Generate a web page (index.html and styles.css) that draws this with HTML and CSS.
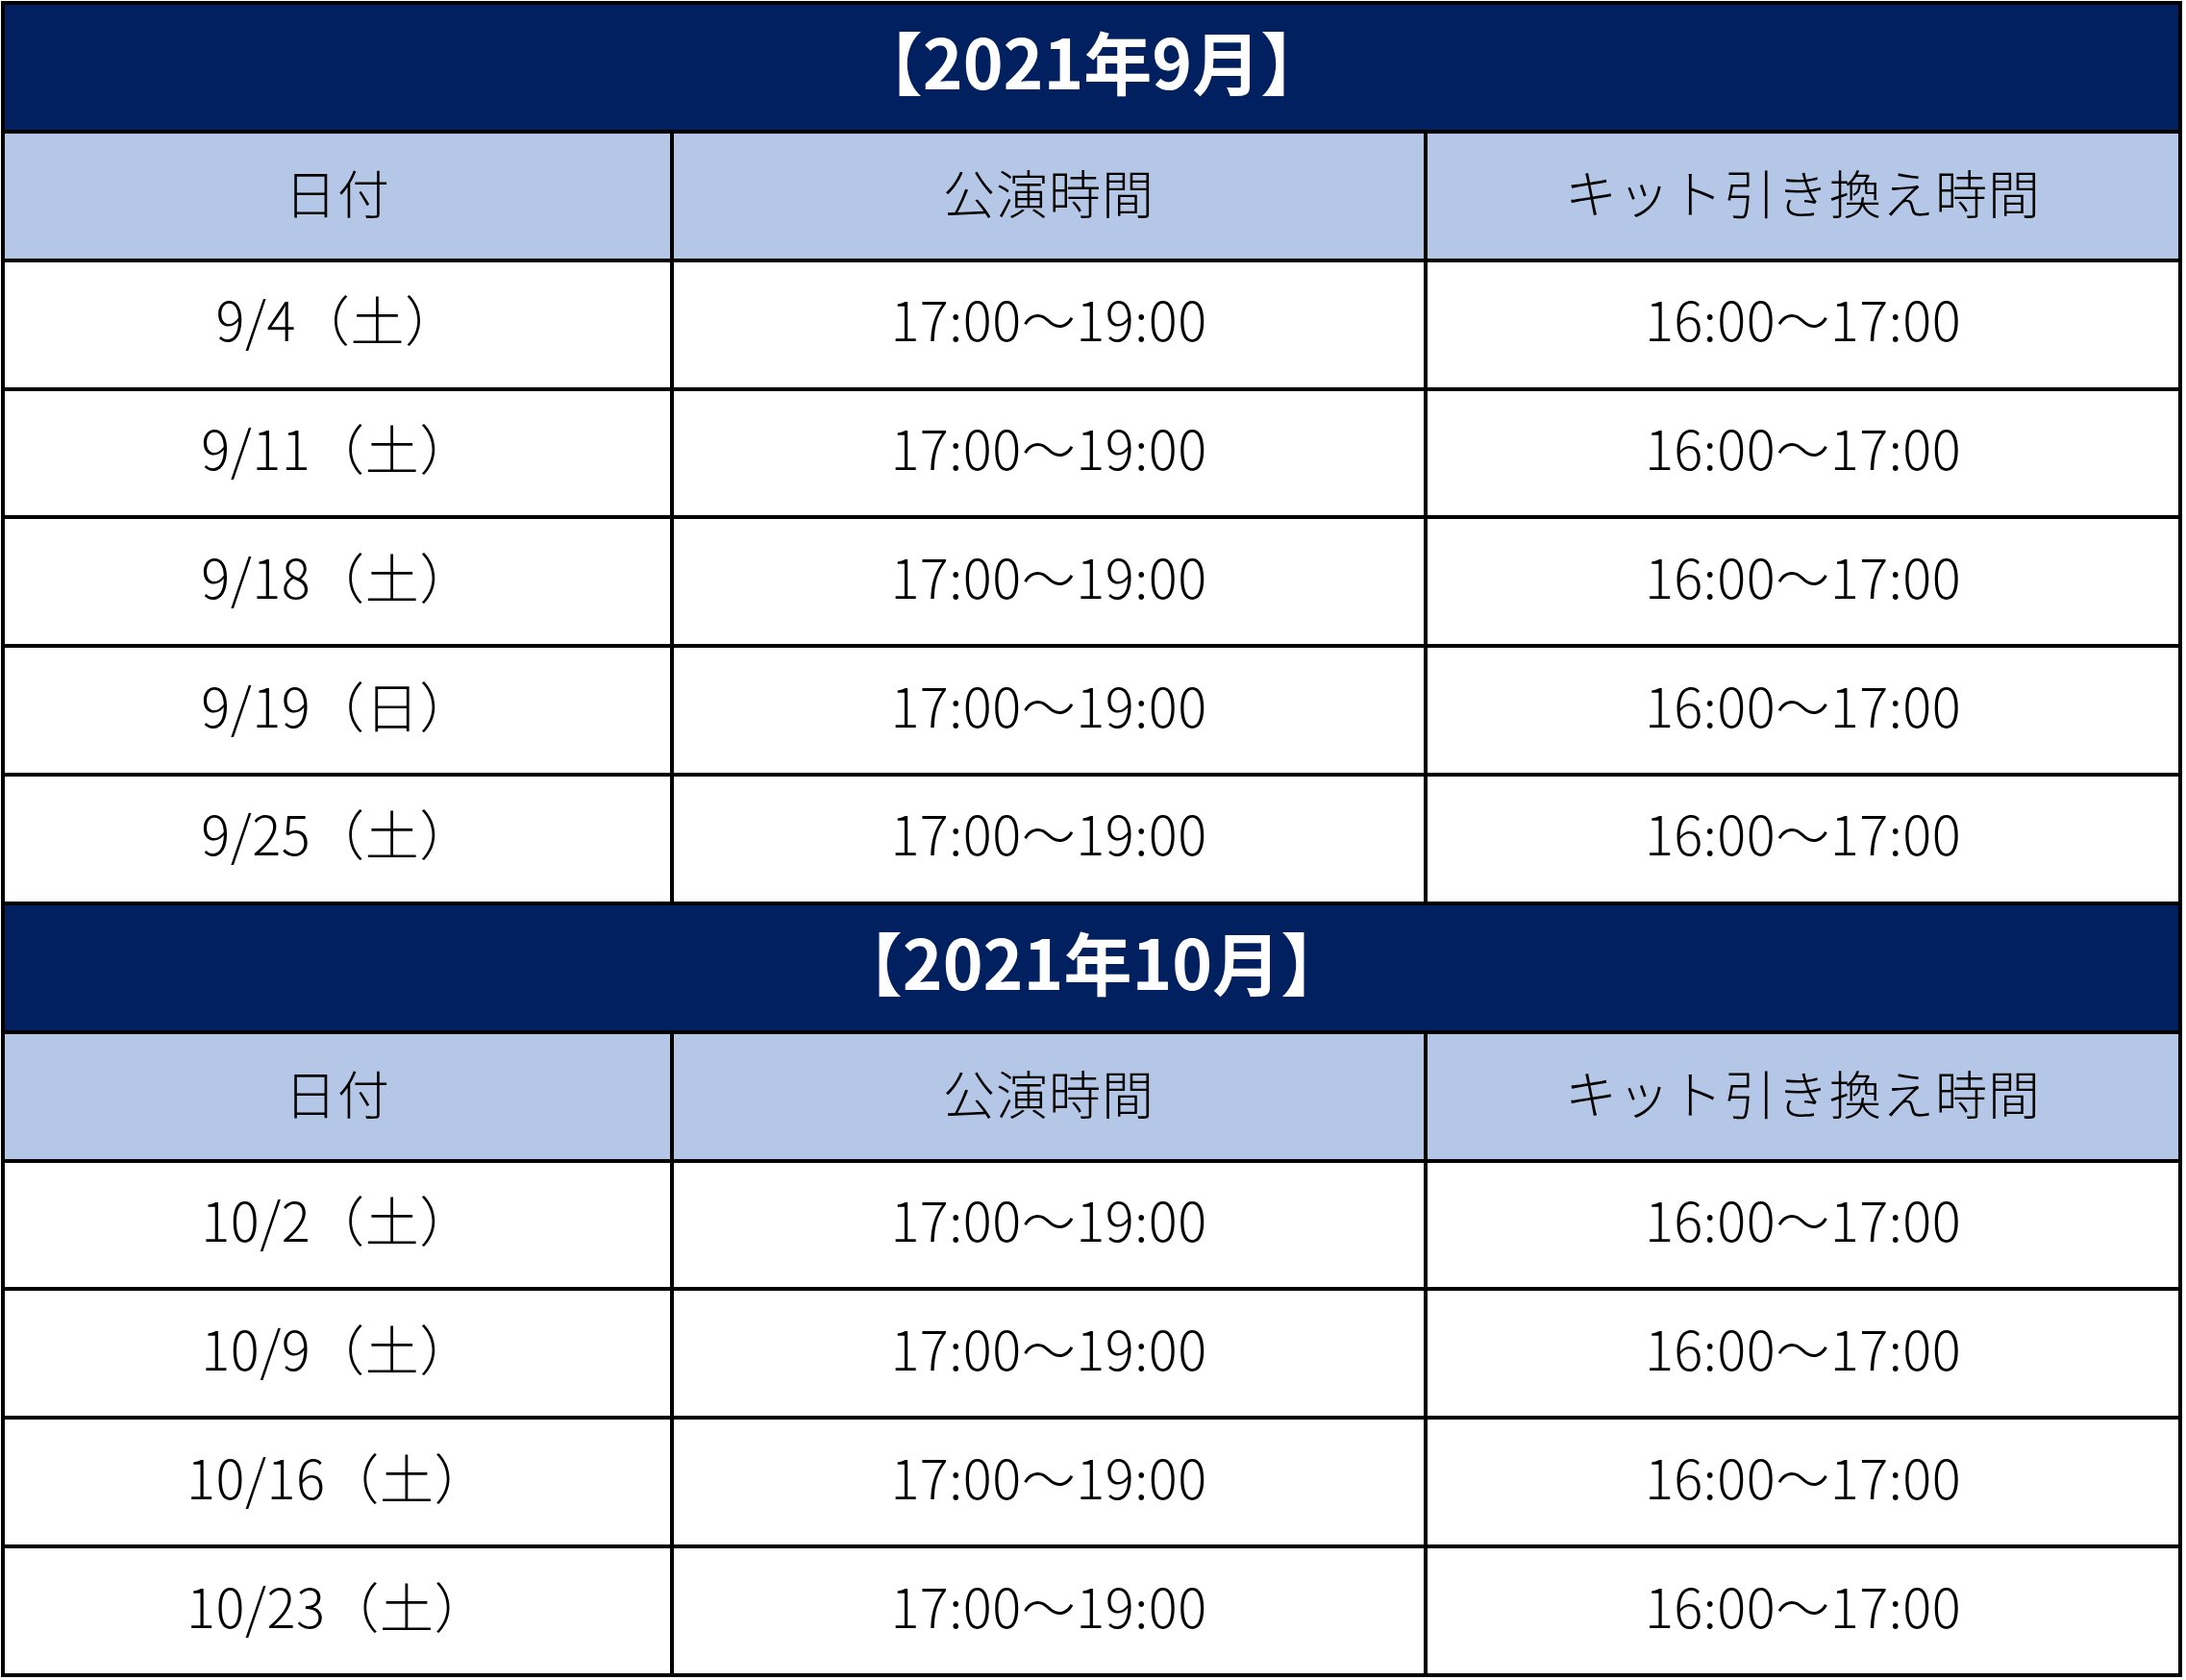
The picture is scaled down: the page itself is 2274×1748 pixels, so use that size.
FILE: index.html
```html
<!DOCTYPE html>
<html lang="ja">
<head>
<meta charset="utf-8">
<title>公演スケジュール</title>
<link rel="stylesheet" href="styles.css">
</head>
<body>
<div class="schedule">
  <div class="cell title">【2021年9月】</div>
  <div class="cell head">日付</div>
  <div class="cell head">公演時間</div>
  <div class="cell head">キット引き換え時間</div>

  <div class="cell">9/4（土）</div>
  <div class="cell">17:00～19:00</div>
  <div class="cell">16:00～17:00</div>

  <div class="cell">9/11（土）</div>
  <div class="cell">17:00～19:00</div>
  <div class="cell">16:00～17:00</div>

  <div class="cell">9/18（土）</div>
  <div class="cell">17:00～19:00</div>
  <div class="cell">16:00～17:00</div>

  <div class="cell">9/19（日）</div>
  <div class="cell">17:00～19:00</div>
  <div class="cell">16:00～17:00</div>

  <div class="cell">9/25（土）</div>
  <div class="cell">17:00～19:00</div>
  <div class="cell">16:00～17:00</div>

  <div class="cell title">【2021年10月】</div>
  <div class="cell head">日付</div>
  <div class="cell head">公演時間</div>
  <div class="cell head">キット引き換え時間</div>

  <div class="cell">10/2（土）</div>
  <div class="cell">17:00～19:00</div>
  <div class="cell">16:00～17:00</div>

  <div class="cell">10/9（土）</div>
  <div class="cell">17:00～19:00</div>
  <div class="cell">16:00～17:00</div>

  <div class="cell">10/16（土）</div>
  <div class="cell">17:00～19:00</div>
  <div class="cell">16:00～17:00</div>

  <div class="cell">10/23（土）</div>
  <div class="cell">17:00～19:00</div>
  <div class="cell">16:00～17:00</div>
</div>
</body>
</html>
```
FILE: styles.css
```css
html, body {
  margin: 0;
  padding: 0;
  background: #ffffff;
}

.schedule {
  margin: 1px 0 0 1px;
  width: 2269px;
  box-sizing: border-box;
  display: grid;
  grid-template-columns: 692px 780px 781px;
  grid-auto-rows: 129.85px;
  gap: 4px;
  padding: 4px;
  background: #000000;
  font-family: "Noto Sans CJK JP", "Noto Sans", sans-serif;
}

.cell {
  display: flex;
  align-items: center;
  justify-content: center;
  box-sizing: border-box;
  padding-bottom: 14px;
  background: #ffffff;
  color: #000000;
  font-size: 56px;
  font-weight: 300;
  letter-spacing: 0.5px;
  white-space: nowrap;
}

.head {
  background: #b4c7e7;
  font-size: 54px;
  letter-spacing: 1px;
  padding-bottom: 8px;
}

.title {
  grid-column: 1 / -1;
  background: #002060;
  color: #ffffff;
  font-size: 71px;
  font-weight: 700;
  letter-spacing: 0;
  padding-bottom: 16px;
}
```
